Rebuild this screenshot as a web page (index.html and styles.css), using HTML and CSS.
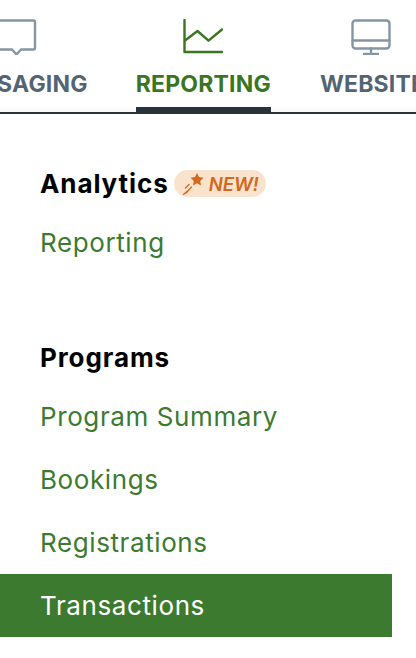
FILE: index.html
```html
<!DOCTYPE html>
<html lang="en">
<head>
  <meta charset="UTF-8" />
  <meta name="viewport" content="width=device-width, initial-scale=1.0" />
  <title>Reporting</title>
  <link rel="stylesheet" href="styles.css">
</head>
<body>

  <nav class="tabs">
    <a class="tab tab-messaging">
      <svg class="tab-icon" viewBox="0 0 40 36" fill="none" stroke="#8496a5" stroke-width="2.4" stroke-linecap="round" stroke-linejoin="round">
        <path d="M3 1.500H36.500a1.500 1.500 0 0 1 1.500 1.500V29a1.500 1.500 0 0 1-1.500 1.500H24L19.500 35.500 15 30.500H3a1.500 1.500 0 0 1-1.500-1.500V3A1.500 1.500 0 0 1 3 1.500Z"/>
      </svg>
      <span>MESSAGING</span>
    </a>
    <a class="tab active">
      <svg class="tab-icon" viewBox="0 0 40 36" fill="none" stroke="#39761f" stroke-width="2.400" stroke-linecap="round" stroke-linejoin="round">
        <path d="M1.500 1V33H39"/>
        <path d="M2 21.500L14.500 12 25.500 21.700 39 10.500"/>
      </svg>
      <span>REPORTING</span>
    </a>
    <a class="tab tab-website">
      <svg class="tab-icon" viewBox="0 0 40 36" fill="none" stroke="#8496a5" stroke-width="2.400" stroke-linecap="round" stroke-linejoin="round">
        <rect x="1.500" y="1.500" width="37" height="28" rx="3"/>
        <path d="M1.500 21.500H38.500M20 29.500V35M13 35H27"/>
      </svg>
      <span>WEBSITE</span>
    </a>
  </nav>

  <main class="menu">
    <section class="group">
      <h3 class="group-title">Analytics
        <span class="badge">
          <svg class="badge-icon" viewBox="0 0 22 22" fill="#d2691f" stroke="#d2691f" stroke-linecap="round">
            <path stroke="none" d="M15 0l2 4.100 4.500.6-3.300 3.200.8 4.500L15 10.300l-4 2.100.8-4.500-3.300-3.200 4.500-.6Z"/>
            <path fill="none" stroke-width="1.300" d="M7 11.500L3.500 15M9.500 14L4 20M5.500 18L1.500 21.500"/>
          </svg>
          <em>NEW!</em>
        </span>
      </h3>
      <a class="link">Reporting</a>
    </section>

    <section class="group">
      <h3 class="group-title">Programs</h3>
      <a class="link">Program Summary</a>
      <a class="link">Bookings</a>
      <a class="link">Registrations</a>
      <a class="link selected">Transactions</a>
    </section>
  </main>

</body>
</html>
```

FILE: styles.css
```css
body { margin: 0; font-family: "Inter", "Liberation Sans", sans-serif; background: white; overflow: hidden; height: 658px; }

.tabs {
  display: flex;
  gap: 49px;
  height: 112px;
  border-bottom: 2px solid #27323a;
  overflow: hidden;
  box-shadow: inset 0 -8px 8px -8px rgba(0,0,0,0.06);
}
.tab {
  display: flex;
  flex-direction: column;
  align-items: center;
  flex-shrink: 0;
  height: 112px;
  box-sizing: border-box;
  padding-top: 19px;
  font-size: 23px;
  font-weight: 700;
  color: #536574;
  letter-spacing: 0.2px;
}
.tab-messaging { margin-left: -54px; }
.tab-icon { width: 40px; height: 36px; margin-bottom: 15px; }
.tab-website .tab-icon { margin-right: 4px; }
.tab.active {
  margin-left: -1px;
  color: #39761f;
  border-bottom: 5px solid #27323a;
}

.menu { padding-top: 42px; width: 392px; }
.group { margin-bottom: 56px; }
.group:last-child { margin-bottom: 0; }
.group-title {
  display: flex;
  align-items: center;
  gap: 5px;
  margin: 0;
  padding-left: 40px;
  height: 55px;
  font-size: 26px;
  font-weight: 700;
  letter-spacing: 0.9px;
  color: black;
}
.badge {
  display: inline-flex;
  align-items: center;
  gap: 5px;
  height: 27px;
  padding: 0 7px 0 8px;
  border-radius: 14px;
  background: #f9e3cd;
  color: #d2691f;
  font-size: 18.5px;
  font-weight: 600;
  letter-spacing: 0;
}
.badge-icon { width: 22px; height: 22px; }
.badge em { font-style: italic; }
.link {
  display: block;
  height: 63px;
  line-height: 63px;
  padding-left: 40px;
  font-size: 26px;
  letter-spacing: 0.6px;
  color: #3c7b2f;
}
.link.selected {
  background: #3c7b2f;
  color: white;
}
```
